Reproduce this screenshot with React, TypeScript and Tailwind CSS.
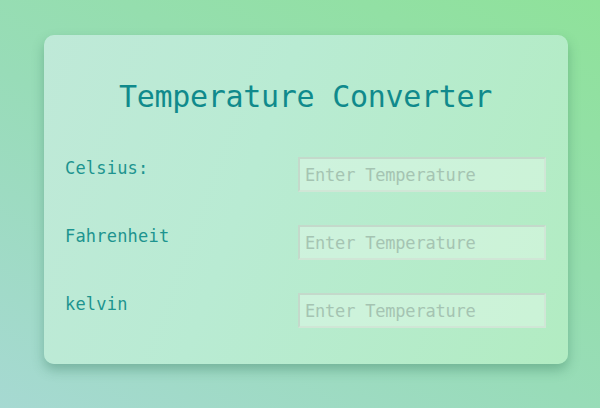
const rows = ["Celsius:", "Fahrenheit", "kelvin"];

const mono = { fontFamily: '"DejaVu Sans Mono", "Liberation Mono", monospace' };

export default function App() {
  return (
    <div className="h-[408px] w-[600px] overflow-hidden bg-[linear-gradient(30deg,#a6d9d2_0%,#98dcb8_45%,#8fe29a_100%)] pt-[35px] pl-[44px]">
      <div
        className="h-[329px] w-[524px] rounded-[10px] bg-[linear-gradient(110deg,#bfe9d8_0%,#b9ebd3_40%,#b2ecc2_100%)] px-[21px] pr-[22px] pt-[43px] shadow-[0_6px_12px_rgba(40,110,80,0.35)]"
        style={mono}
      >
        <h1 className="text-center text-[30px] leading-[38px] tracking-[-0.3px] text-[#108a8c]">
          Temperature Converter
        </h1>
        <div className="mt-[41px] flex flex-col gap-[33px]">
          {rows.map((r) => (
            <div key={r} className="flex items-start justify-between">
              <label className="pt-[1px] text-[17px] leading-[20px] tracking-[0.2px] text-[#1d948f]">{r}</label>
              <input
                placeholder="Enter Temperature"
                className="h-[35px] w-[248px] border-2 border-[#d0e6d6] border-t-[#c4d9cb] border-l-[#c4d9cb] bg-[rgba(228,249,234,0.5)] px-[5px] text-[17px] tracking-[-0.2px] text-[#5a8a7a] outline-none placeholder:text-[#a5c4b2]"
                style={mono}
              />
            </div>
          ))}
        </div>
      </div>
    </div>
  );
}
